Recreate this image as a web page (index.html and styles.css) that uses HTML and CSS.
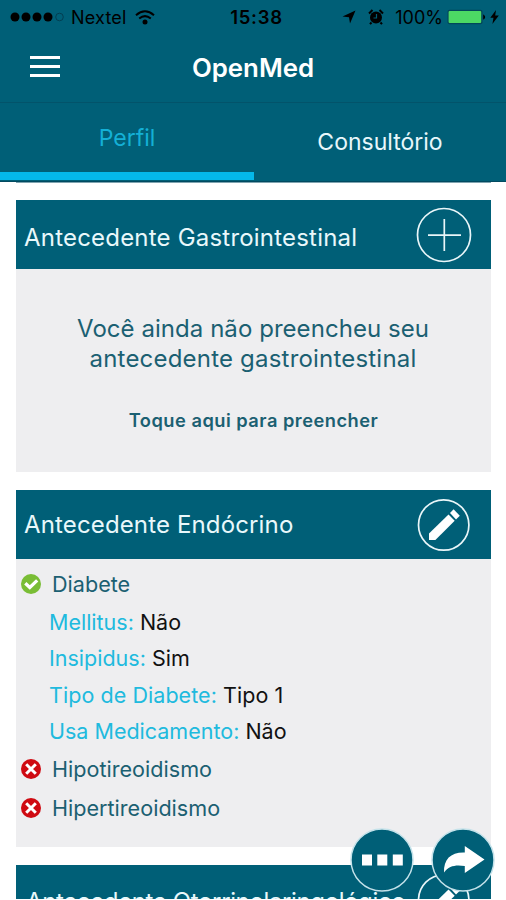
FILE: index.html
```
<!DOCTYPE html>
<html lang="pt-BR">
<head>
    <meta charset="UTF-8" />
    <title>OpenMed</title>
    <meta name="viewport" content="width=device-width, initial-scale=1" />
    <link rel="stylesheet" href="styles.css">
</head>
<body>
    <div class="app">
        <header class="topbar">
            <div class="status">
                <div class="status-left">
                    <svg class="signal" width="54" height="10" viewBox="0 0 54 10">
                        <circle cx="5" cy="5" r="4.5"/>
                        <circle cx="16" cy="5" r="4.5"/>
                        <circle cx="27" cy="5" r="4.5"/>
                        <circle cx="38" cy="5" r="4.5"/>
                        <circle cx="49.5" cy="5" r="3.8" fill="none" stroke="#033f52" stroke-width="1"/>
                    </svg>
                    <span class="carrier">Nextel</span>
                    <svg class="wifi" width="20" height="15" viewBox="0 0 20 15">
                        <path d="M1 5.2Q10-2.6 19 5.2" fill="none" stroke="#000" stroke-width="2"/>
                        <path d="M4.2 8.6Q10 3.6 15.8 8.6" fill="none" stroke="#000" stroke-width="2"/>
                        <circle cx="10" cy="12" r="2.5"/>
                    </svg>
                </div>
                <span class="clock">15:38</span>
                <div class="status-right">
                    <svg class="location" width="14" height="14" viewBox="0 0 14 14">
                        <path d="M13.5.5L8 13.5 7 7.3.5 6.5z"/>
                    </svg>
                    <svg class="alarm" width="16" height="16" viewBox="0 0 16 16">
                        <circle cx="8" cy="8.5" r="6"/>
                        <path d="M1 4.5L4.5 1M15 4.5L11.5 1M3.5 13.5L2 15.2M12.5 13.5L14 15.2" stroke="#000" stroke-width="2"/>
                        <path d="M8.5 5v4H5.5" fill="none" stroke="#005f77" stroke-width="1.2"/>
                    </svg>
                    <span class="percent">100%</span>
                    <svg class="battery" width="40" height="16" viewBox="0 0 40 16">
                        <rect x=".5" y=".8" width="35" height="14.4" rx="2" fill="#02475a"/>
                        <rect x="1.6" y="2" width="32.6" height="12" rx="1" fill="#4cd964"/>
                        <path d="M36.2 5.2q4 2.8 0 5.6z"/>
                    </svg>
                    <svg class="bolt" width="9" height="14" viewBox="0 0 9 14">
                        <path d="M6 0L.3 7.8h3.2L2.4 14 8.8 5.6H5.2z"/>
                    </svg>
                </div>
            </div>
            <nav class="navbar">
                <div class="menu"><i></i><i></i><i></i></div>
                <h1>OpenMed</h1>
            </nav>
            <div class="tabs">
                <a class="tab active"><span>Perfil</span></a>
                <a class="tab"><span>Consultório</span></a>
            </div>
        </header>
        <main class="content">
            <section class="card">
                <div class="card-head">
                    <h2 class="gastro">Antecedente Gastrointestinal</h2>
                    <svg class="round-btn" width="56" height="56" viewBox="0 0 56 56">
                        <circle cx="28" cy="28" r="26.5"/>
                        <path d="M12 28.2h33M28.3 12v32"/>
                    </svg>
                </div>
                <div class="card-body empty">
                    <p class="empty-text">Você ainda não preencheu seu<br><span class="line2">antecedente gastrointestinal</span></p>
                    <a class="fill-link">Toque aqui para preencher</a>
                </div>
            </section>
            <section class="card">
                <div class="card-head">
                    <h2>Antecedente Endócrino</h2>
                    <svg class="round-btn" width="56" height="56" viewBox="0 0 56 56">
                        <circle cx="27.7" cy="28" r="25.2"/>
                        <g class="solid">
                            <path d="M13 43v-6.5L32.5 17.5l6.2 6.2L19.4 43z"/>
                            <path d="M34 16L37.6 12.3l6.2 6.4-3.8 3.7z"/>
                        </g>
                    </svg>
                </div>
                <div class="card-body list">
                    <div class="item first">
                        <svg width="20" height="20" viewBox="0 0 20 20">
                            <circle cx="10" cy="10" r="10" fill="#79bd35"/>
                            <path d="M4.3 9.2l4.5 4.2 7.4-7" fill="none" stroke="#fff" stroke-width="3.3"/>
                        </svg>
                        <span>Diabete</span>
                    </div>
                    <div class="detail"><span>Mellitus:</span> <b>Não</b></div>
                    <div class="detail"><span>Insipidus:</span> <b>Sim</b></div>
                    <div class="detail tipo"><span>Tipo de Diabete:</span> <b>Tipo 1</b></div>
                    <div class="detail"><span>Usa Medicamento:</span> <b>Não</b></div>
                    <div class="item">
                        <svg width="20" height="20" viewBox="0 0 20 20">
                            <circle cx="10" cy="10" r="10" fill="#cf0a12"/>
                            <path d="M5.2 5.2l9.6 9.6M14.8 5.2l-9.6 9.6" stroke="#fff" stroke-width="3"/>
                        </svg>
                        <span>Hipotireoidismo</span>
                    </div>
                    <div class="item">
                        <svg width="20" height="20" viewBox="0 0 20 20">
                            <circle cx="10" cy="10" r="10" fill="#cf0a12"/>
                            <path d="M5.2 5.2l9.6 9.6M14.8 5.2l-9.6 9.6" stroke="#fff" stroke-width="3"/>
                        </svg>
                        <span>Hipertireoidismo</span>
                    </div>
                </div>
            </section>
            <section class="card">
                <div class="card-head">
                    <h2 class="otorrino">Antecedente Otorrinolaringológico</h2>
                    <svg class="round-btn" width="56" height="56" viewBox="0 0 56 56">
                        <circle cx="27.7" cy="28" r="25.2"/>
                        <g class="solid">
                            <path d="M13 43v-6.5L32.5 17.5l6.2 6.2L19.4 43z"/>
                            <path d="M34 16L37.6 12.3l6.2 6.4-3.8 3.7z"/>
                        </g>
                    </svg>
                </div>
            </section>
        </main>
        <!-- floating actions -->
        <div class="fabs">
            <svg width="64" height="64" viewBox="0 0 64 64">
                <circle cx="32" cy="32" r="31"/>
                <path d="M12 26.5h10v11H12zM27.3 26.5h10v11h-10zM42.8 26.5h10v11h-10z"/>
            </svg>
            <svg width="64" height="64" viewBox="0 0 64 64">
                <circle cx="32" cy="32" r="31"/>
                <path d="M13 44.5C12.5 31 20 24 33.8 24.5V18L53.5 31.5 33.8 45v-7C25 36.5 18 37.5 13 44.5z"/>
            </svg>
        </div>
    </div>
</body>
</html>
```
FILE: styles.css
```
* {
    box-sizing: border-box;
}
body {
    font-family: Inter, "Liberation Sans", sans-serif;
    margin: 0;
    background: #fff;
}
svg {
    display: block;
    flex: none;
}
h1, h2, p {
    margin: 0;
    font-weight: 400;
}
.app {
    position: relative;
    height: 899px;
    overflow: hidden;
    white-space: nowrap;
}

/* top bar */
.topbar {
    height: 182px;
    background: #005f77;
    border-bottom: 1px solid #024a60;
}
.status {
    display: grid;
    grid-template-columns: 1fr auto 1fr;
    align-items: center;
    height: 34px;
    padding: 0 7px 0 10px;
    font-size: 18px;
}
.status-left, .status-right {
    display: flex;
    align-items: center;
}
.status-right {
    justify-content: flex-end;
}
.carrier {
    margin: 0 8px 0 7px;
    letter-spacing: 0.2px;
}
.clock {
    padding-left: 4px;
    font-weight: 600;
    font-size: 18.5px;
    letter-spacing: 0.7px;
}
.alarm {
    margin: 0 11px 0 12px;
}
.percent {
    margin-right: 4px;
}
.bolt {
    margin-left: 3px;
}
.navbar {
    display: grid;
    grid-template-columns: 60px 1fr 60px;
    align-items: center;
    height: 69px;
    border-bottom: 1px solid #02536a;
}
.menu {
    display: flex;
    flex-direction: column;
    gap: 6px;
    padding-left: 30px;
    margin-top: -4px;
}
.menu i {
    width: 30px;
    height: 3px;
    background: #fff;
}
h1 {
    margin-top: -2px;
    text-align: center;
    color: #fff;
    font-weight: 600;
    font-size: 25.8px;
}
.tabs {
    display: grid;
    grid-template-columns: 254px 1fr;
    height: 77px;
    font-size: 23px;
}
.tab {
    display: flex;
    align-items: center;
    justify-content: center;
    color: #e8f7fb;
}
.tab.active {
    color: #14b0d6;
    border-bottom: 8px solid #04b8ea;
}

/* cards */
.content {
    margin: 0 15px 0 16px;
    border-top: 1px solid #7fa4b0;
    padding-top: 17px;
}
.card {
    margin-bottom: 18px;
}
.card-head {
    display: flex;
    align-items: center;
    justify-content: space-between;
    height: 69px;
    padding: 0 19px 0 8px;
    background: #005f77;
}
h2 {
    color: #e9f8fb;
    font-size: 24px;
    letter-spacing: 0.14px;
}
.gastro {
    padding-top: 5px;
    letter-spacing: 0.2px;
}
.otorrino {
    padding: 3px 0 0 2px;
    letter-spacing: -0.37px;
}
.round-btn {
    fill: none;
    stroke: #e9f6f9;
    stroke-width: 1.7;
}
.solid {
    fill: #fff;
    stroke: none;
}
.card-body {
    background: #eeeef0;
    color: #1b6072;
}
.empty {
    height: 203px;
    padding-top: 45px;
    text-align: center;
}
.empty-text {
    padding-right: 1px;
    font-size: 24px;
    line-height: 30px;
    letter-spacing: 0.05px;
}
.line2 {
    letter-spacing: 0.2px;
}
.fill-link {
    display: block;
    margin-top: 34px;
    font-weight: 600;
    font-size: 18.3px;
    line-height: 24px;
    letter-spacing: 0.48px;
}
.list {
    height: 288px;
    padding: 5px 5px 0;
    font-size: 21.6px;
}
.item {
    display: flex;
    align-items: center;
    gap: 11px;
    height: 39px;
}
.item.first {
    height: 40px;
}
.detail {
    height: 36.3px;
    line-height: 36.3px;
    padding-left: 28px;
    color: #20bade;
    font-size: 21.5px;
}
.tipo {
    letter-spacing: 0.06px;
}
.detail b {
    color: #111;
    font-weight: 400;
}

.fabs {
    position: absolute;
    left: 350px;
    top: 828px;
    display: flex;
    gap: 17px;
}
.fabs circle {
    fill: #005f77;
    stroke: #c4e2ea;
    stroke-width: 1.5;
}
.fabs path {
    fill: #fff;
}
```
